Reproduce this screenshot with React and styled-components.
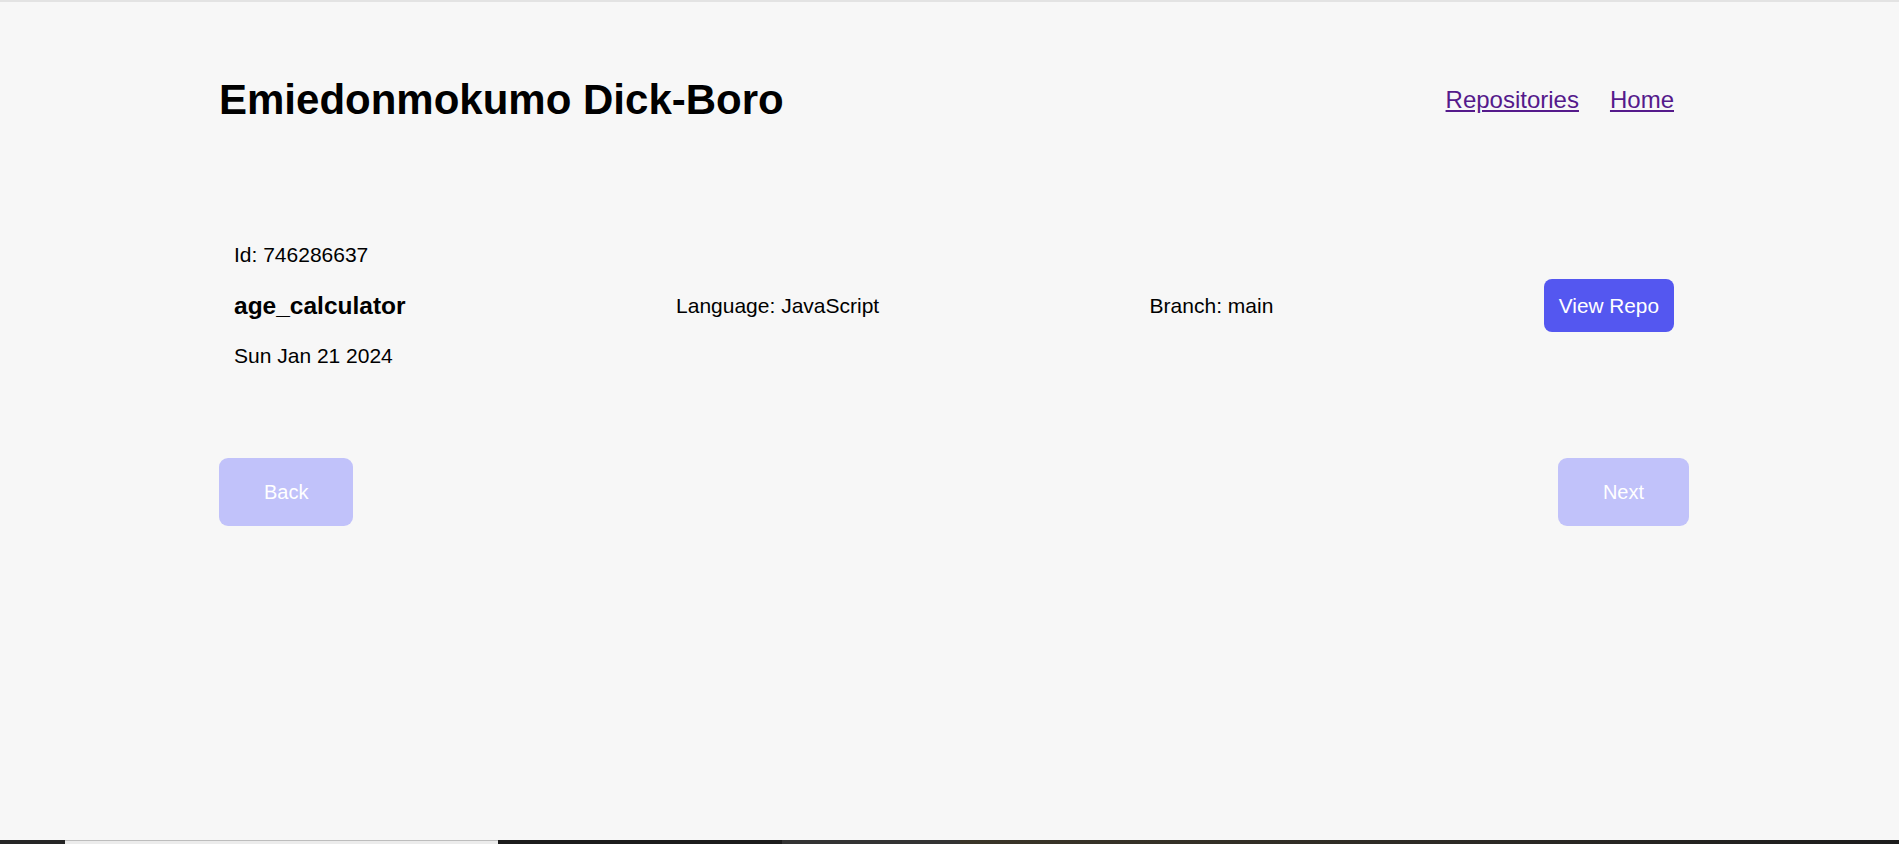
import React from "react";
import styled, { createGlobalStyle } from "styled-components";

const GlobalStyle = createGlobalStyle`
  html, body {
    margin: 0;
    padding: 0;
    background: #f7f7f7;
  }
  body {
    font-family: "Liberation Sans", Arial, sans-serif;
    color: #000;
  }
  * { box-sizing: border-box; }
`;

const Screen = styled.div`
  min-height: 100vh;
  display: flex;
  flex-direction: column;
  border-top: 2px solid #e3e3e3;
`;

const Page = styled.main`
  flex: 1;
  padding: 74px 210px 0 219px;
`;

const Header = styled.header`
  display: flex;
  align-items: center;
  justify-content: space-between;
  padding-right: 15px;
`;

const Title = styled.h1`
  margin: 0;
  font-size: 42px;
  line-height: 48px;
  font-weight: 700;
`;

const Nav = styled.nav`
  display: flex;
  gap: 31px;
`;

const NavLink = styled.a`
  font-size: 24px;
  line-height: 28px;
  color: #551a8b;
  text-decoration: underline;
`;

const Card = styled.section`
  margin-top: 104px;
  padding: 15px;
  display: flex;
  flex-direction: column;
  gap: 12px;
`;

const Meta = styled.div`
  font-size: 21px;
  line-height: 24px;
`;

const Row = styled.div`
  display: flex;
  align-items: center;
  justify-content: space-between;
`;

const RepoName = styled.h2`
  margin: 0;
  font-size: 24.5px;
  line-height: 28px;
  font-weight: 700;
`;

const Field = styled.span`
  font-size: 21px;
  line-height: 24px;
`;

const ViewButton = styled.a`
  display: inline-block;
  background: #5457f0;
  color: #fff;
  font-size: 20.8px;
  line-height: 24px;
  padding: 14.5px 15px;
  border-radius: 8px;
  text-decoration: none;
`;

const Pager = styled.div`
  margin-top: 75px;
  display: flex;
  justify-content: space-between;
`;

const PageButton = styled.button`
  font-family: inherit;
  font-size: 20px;
  line-height: 24px;
  padding: 22px ${(p) => p.$px}px;
  border: none;
  border-radius: 9px;
  background: #c1c2fa;
  color: #fff;
  cursor: not-allowed;
`;

const Taskbar = styled.div`
  height: 4px;
  display: grid;
  grid-template-columns: 65px 433px 284px 178px 1fr;
`;

const Segment = styled.div`
  background: ${(p) => p.$bg};
  border-top: ${(p) => (p.$light ? "1px solid #bdbdbd" : "none")};
`;

export default function App() {
  return (
    <>
      <GlobalStyle />
      <Screen>
        <Page>
          <Header>
            <Title>Emiedonmokumo Dick-Boro</Title>
            <Nav>
              <NavLink href="#repositories">Repositories</NavLink>
              <NavLink href="#home">Home</NavLink>
            </Nav>
          </Header>
          <Card>
            <Meta>Id: 746286637</Meta>
            <Row>
              <RepoName>age_calculator</RepoName>
              <Field>Language: JavaScript</Field>
              <Field>Branch: main</Field>
              <ViewButton href="#repo">View Repo</ViewButton>
            </Row>
            <Meta>Sun Jan 21 2024</Meta>
          </Card>
          <Pager>
            <PageButton disabled $px={45}>Back</PageButton>
            <PageButton disabled $px={45}>Next</PageButton>
          </Pager>
        </Page>
        <Taskbar>
          <Segment $bg="#262626" />
          <Segment $bg="#ececec" $light />
          <Segment $bg="#1c1c1c" />
          <Segment $bg="#333333" />
          <Segment $bg="linear-gradient(90deg, #3a3528, #2a2824 60%, #1c1c1c)" />
        </Taskbar>
      </Screen>
    </>
  );
}
